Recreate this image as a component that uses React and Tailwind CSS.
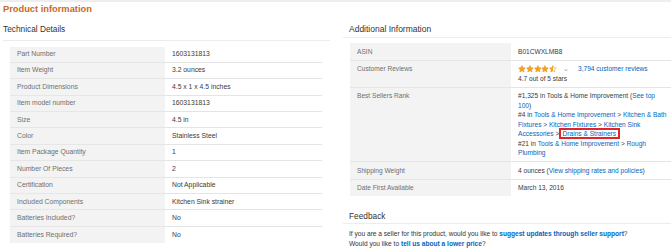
import React from "react";

const TECH = [
  ["Part Number", "1603131813"],
  ["Item Weight", "3.2 ounces"],
  ["Product Dimensions", "4.5 x 1 x 4.5 inches"],
  ["Item model number", "1603131813"],
  ["Size", "4.5 in"],
  ["Color", "Stainless Steel"],
  ["Item Package Quantity", "1"],
  ["Number Of Pieces", "2"],
  ["Certification", "Not Applicable"],
  ["Included Components", "Kitchen Sink strainer"],
  ["Batteries Included?", "No"],
  ["Batteries Required?", "No"],
];

const Link = ({ children, bold }) => (
  <span className={`text-[#0066c0] ${bold ? "font-bold" : ""}`}>{children}</span>
);

const Star = ({ fill = 1, id }) => (
  <svg width="7.8" height="7.8" viewBox="0 0 24 24">
    <defs>
      <linearGradient id={id}>
        <stop offset={`${fill * 100}%`} stopColor="#f3a21b" />
        <stop offset={`${fill * 100}%`} stopColor="#ffffff" />
      </linearGradient>
    </defs>
    <path
      d="M12 1.8l3.1 6.6 7.2.9-5.3 5 1.4 7.1L12 17.9l-6.4 3.5L7 14.3l-5.3-5 7.2-.9z"
      fill={`url(#${id})`}
      stroke="#e0901a"
      strokeWidth="1.6"
      strokeLinejoin="round"
    />
  </svg>
);

const Stars = () => (
  <span className="inline-flex items-center align-middle">
    <Star id="s1" />
    <Star id="s2" />
    <Star id="s3" />
    <Star id="s4" />
    <Star id="s5" fill={0.55} />
  </span>
);

const RightRow = ({ label, children, last }) => (
  <div className="flex">
    <div
      className={`w-[161px] shrink-0 bg-[#f3f3f3] pl-[7px] py-[3.5px] leading-[9.5px] text-[#6f6f6f] ${
        last ? "" : "border-b border-[#e6e6e6]"
      }`}
    >
      {label}
    </div>
    <div
      className={`flex-1 pl-[7px] py-[3.5px] leading-[9.5px] text-[#3a3a3a] ${
        last ? "" : "border-b border-[#e4e4e4]"
      }`}
    >
      {children}
    </div>
  </div>
);

export default function App() {
  return (
    <div className="w-[671px] h-[250px] overflow-hidden bg-white font-['Liberation_Sans',Arial,sans-serif]">
      <div className="h-[2px] bg-[#eeeeee]" />
      <div className="mt-[1px] pl-[3px] text-[9.3px] font-bold leading-[12px] text-[#c9691c]">
        Product information
      </div>

      <div className="flex">
        {/* Technical Details */}
        <div className="w-[335px] shrink-0 pl-[3px] pr-[5px]">
          <div className="mt-[8px] text-[8.3px] leading-[12px] text-[#333]">Technical Details</div>
          <div className="mt-[4.5px] h-px bg-[#ececec]" />
          <div className="mt-[6px] ml-[7px] w-[312px] text-[6.8px]">
            {TECH.map(([label, value], i) => (
              <div key={label} className="flex h-[16.4px]">
                <div
                  className={`w-[155px] shrink-0 bg-[#f3f3f3] pl-[7px] flex items-center text-[#6f6f6f] ${
                    i < TECH.length - 1 ? "border-b border-[#e6e6e6]" : ""
                  }`}
                >
                  {label}
                </div>
                <div
                  className={`flex-1 pl-[7px] flex items-center text-[#3a3a3a] ${
                    i < TECH.length - 1 ? "border-b border-[#e4e4e4]" : ""
                  }`}
                >
                  {value}
                </div>
              </div>
            ))}
          </div>
        </div>

        {/* Additional Information */}
        <div className="flex-1">
          <div className="mt-[8px] pl-[14px] text-[8.5px] leading-[12px] text-[#333]">
            Additional Information
          </div>
          <div className="mt-[2px] ml-[8px] h-px bg-[#ececec]" />
          <div className="mt-[5px] ml-[15px] text-[6.6px]">
            <RightRow label="ASIN">B01CWXLMB8</RightRow>
            <RightRow label="Customer Reviews">
              <div className="flex items-center h-[9.5px]">
                <Stars />
                <span className="ml-[6px] text-[#999]">⌄</span>
                <span className="ml-[9px]">
                  <Link>3,794 customer reviews</Link>
                </span>
              </div>
              <div>4.7 out of 5 stars</div>
            </RightRow>
            <RightRow label="Best Sellers Rank">
              <div className="whitespace-nowrap">
                #1,325 in Tools &amp; Home Improvement (<Link>See top</Link>
              </div>
              <div className="whitespace-nowrap">
                <Link>100</Link>)
              </div>
              <div className="whitespace-nowrap">
                #4 in <Link>Tools &amp; Home Improvement</Link> &gt; <Link>Kitchen &amp; Bath</Link>
              </div>
              <div className="whitespace-nowrap">
                <Link>Fixtures</Link> &gt; <Link>Kitchen Fixtures</Link> &gt; <Link>Kitchen Sink</Link>
              </div>
              <div className="whitespace-nowrap">
                <Link>Accessories</Link> &gt;{" "}
                <span className="outline-2 outline-[#e0262a] outline-offset-[0.5px] px-[1.5px]">
                  <Link>Drains &amp; Strainers</Link>
                </span>
              </div>
              <div className="whitespace-nowrap">
                #21 in <Link>Tools &amp; Home Improvement</Link> &gt; <Link>Rough</Link>
              </div>
              <div className="whitespace-nowrap">
                <Link>Plumbing</Link>
              </div>
            </RightRow>
            <RightRow label="Shipping Weight">
              4 ounces (<Link>View shipping rates and policies</Link>)
            </RightRow>
            <RightRow label="Date First Available" last>
              March 13, 2016
            </RightRow>
          </div>

          {/* Feedback */}
          <div className="mt-[13.5px] pl-[14px] text-[8.3px] leading-[12px] text-[#333]">Feedback</div>
          <div className="mt-[1.5px] ml-[8px] h-px bg-[#ececec]" />
          <div className="mt-[5px] pl-[14px] text-[6.6px] leading-[10px] text-[#333]">
            <div className="whitespace-nowrap">
              If you are a seller for this product, would you like to{" "}
              <Link bold>suggest updates through seller support</Link>?
            </div>
            <div className="whitespace-nowrap">
              Would you like to <Link bold>tell us about a lower price</Link>?
            </div>
          </div>
        </div>
      </div>
    </div>
  );
}
